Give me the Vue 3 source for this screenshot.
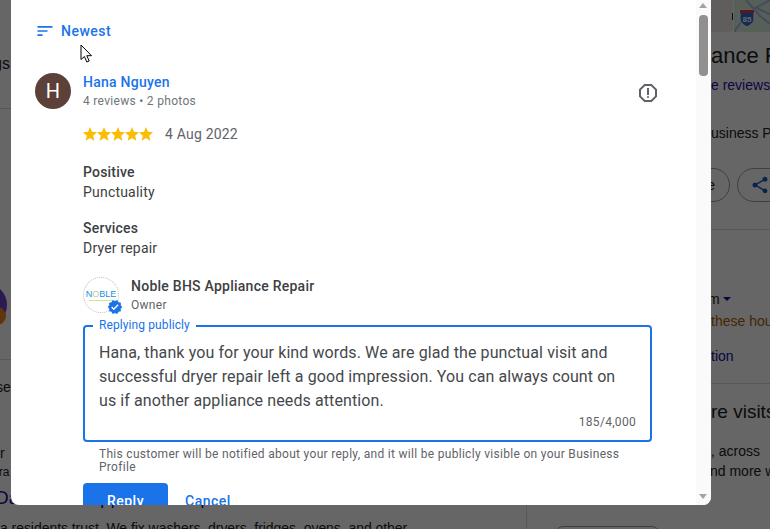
<template>
  <div class="page">
    <div class="main">
      <div class="strip-text gs">gs</div>
      <div class="rule first"></div>
      <div class="biz-avatar"><span class="biz-badge"></span></div>
      <div class="rule second"></div>
      <div class="strip-text se">se</div>
      <div class="strip-text rr">r</div>
      <div class="strip-text ira">ira</div>
      <div class="post-title">Dan's Star Appliance Repair in Atlanta</div>
      <div class="post-text">a residents trust. We fix washers, dryers, fridges, ovens, and other</div>
    </div>
    <div class="side">
      <div class="map-row">
        <div class="photo"><span class="photo-mark"></span></div>
        <svg class="map" viewBox="0 0 36 32">
          <rect width="36" height="32" fill="#d6f0dc" />
          <path d="M0 32L14 12L36 0M12 0L26 16L36 24M22 8L36 14" fill="none" stroke="#a9bce6" stroke-width="2" />
          <path d="M6 10h14v9c0 4-4 6-7 8c-3-2-7-4-7-8z" fill="#2f6fd6" stroke="#fff" stroke-width="1" />
          <rect x="6" y="10" width="14" height="3" fill="#e04040" />
          <text x="13" y="22" class="shield">85</text>
        </svg>
      </div>
      <div class="frag name">ance Repair</div>
      <div class="frag link reviews">e reviews</div>
      <div class="frag plain profile">usiness Profile</div>
      <div class="pills">
        <div class="pill save">e</div>
        <div class="pill share">
          <svg width="20" height="20" viewBox="0 0 24 24"><path d="M18 16.08c-.76 0-1.44.3-1.96.77L8.91 12.7c.05-.23.09-.46.09-.7s-.04-.47-.09-.7l7.05-4.11c.54.5 1.25.81 2.04.81 1.66 0 3-1.34 3-3s-1.34-3-3-3-3 1.34-3 3c0 .24.04.47.09.7L8.04 9.81C7.5 9.31 6.79 9 6 9c-1.66 0-3 1.34-3 3s1.34 3 3 3c.79 0 1.5-.31 2.04-.81l7.12 4.16c-.05.21-.08.43-.08.65 0 1.61 1.31 2.92 2.92 2.92s2.92-1.31 2.92-2.92-1.31-2.92-2.92-2.92z" fill="#1a56c4" /></svg>
        </div>
      </div>
      <div class="side-rule top"></div>
      <div class="frag plain hours">m<span class="caret"></span></div>
      <div class="frag warn">these hours</div>
      <div class="frag link suggest">tion</div>
      <div class="side-rule bottom"></div>
      <div class="frag visits">re visits</div>
      <div class="frag plain across">, across</div>
      <div class="frag plain more">nd more with</div>
      <div class="bottom-pill"></div>
    </div>
    <div class="scrim"></div>

    <div class="dialog">
      <div class="content">
        <div class="sort">
          <svg width="20" height="20" viewBox="0 0 24 24"><path d="M3 18h6v-2H3v2zM3 6v2h18V6H3zm0 7h12v-2H3v2z" fill="#1a73e8" /></svg>
          <span>Newest</span>
        </div>

        <div class="review-head">
          <div class="avatar">H</div>
          <div class="author">
            <div class="author-name">Hana Nguyen</div>
            <div class="author-meta">4 reviews • 2 photos</div>
          </div>
          <svg class="flag" width="24" height="24" viewBox="0 0 24 24" fill="#5f6368">
            <path d="M15.73 3H8.27L3 8.27v7.46L8.27 21h7.46L21 15.73V8.27L15.73 3zM19 14.9L14.9 19H9.1L5 14.9V9.1L9.1 5h5.8L19 9.1v5.8z" />
            <circle cx="12" cy="16" r="1" />
            <rect x="11" y="7" width="2" height="7" />
          </svg>
        </div>

        <div class="body">
          <div class="rating">
            <div class="stars">
              <svg v-for="n in 5" :key="n" width="14" height="14" viewBox="2 2 20 19.3" preserveAspectRatio="none">
                <path d="M12 17.27L18.18 21l-1.64-7.03L22 9.24l-7.19-.61L12 2 9.19 8.63 2 9.24l5.46 4.73L5.82 21z" fill="#fbbc04" />
              </svg>
            </div>
            <span class="date">4 Aug 2022</span>
          </div>

          <div v-for="group in groups" :key="group.title" class="group">
            <div class="group-title">{{ group.title }}</div>
            <div class="group-value">{{ group.value }}</div>
          </div>

          <div class="owner">
            <div class="logo">
              <span class="logo-word">N<i>O</i>BLE</span>
              <span class="logo-bar"></span>
              <svg class="verified" width="16" height="16" viewBox="0 0 24 24">
                <circle cx="12" cy="12" r="7" fill="#fff" />
                <path d="M23 12l-2.44-2.79.34-3.69-3.61-.82-1.89-3.2L12 2.96 8.6 1.5 6.71 4.69 3.1 5.5l.34 3.7L1 12l2.44 2.79-.34 3.7 3.61.82L8.6 22.5l3.4-1.47 3.4 1.46 1.89-3.19 3.61-.82-.34-3.69L23 12zm-12.91 4.72l-3.8-3.81 1.48-1.48 2.32 2.33 5.85-5.87 1.48 1.48-7.33 7.35z" fill="#1a73e8" />
              </svg>
            </div>
            <div>
              <div class="owner-name">Noble BHS Appliance Repair</div>
              <div class="owner-role">Owner</div>
            </div>
          </div>

          <div class="reply-box">
            <span class="reply-label">Replying publicly</span>
            <div class="reply-text">Hana, thank you for your kind words. We are glad the punctual visit and successful dryer repair left a good impression. You can always count on us if another appliance needs attention.</div>
            <div class="reply-count">185/4,000</div>
          </div>
          <div class="notice">This customer will be notified about your reply, and it will be publicly visible on your Business Profile</div>

          <div class="actions">
            <button class="btn-reply">Reply</button>
            <button class="btn-cancel">Cancel</button>
          </div>
        </div>
      </div>
      <div class="scrollbar">
        <span class="arrow up"></span>
        <span class="thumb"></span>
        <span class="arrow down"></span>
      </div>
    </div>

    <svg class="cursor" width="14" height="19" viewBox="0 0 14 19">
      <path d="M1 1v14.5l3.4-3 2.4 5.5 2.4-1-2.4-5.3h4.7z" fill="#fff" stroke="#000" stroke-width="1" stroke-linejoin="round" />
    </svg>
  </div>
</template>

<script setup>
const groups = [
  { title: 'Positive', value: 'Punctuality' },
  { title: 'Services', value: 'Dryer repair' },
]
</script>

<style>
html,
body {
  margin: 0;
  overflow: hidden;
}
</style>

<style scoped>
.page {
  position: relative;
  width: 770px;
  height: 529px;
  overflow: hidden;
  display: flex;
  background: #fff;
  font-family: "Liberation Sans", Arial, sans-serif;
  color: #202124;
}

.main {
  width: 527px;
  height: 529px;
  flex-shrink: 0;
  box-sizing: border-box;
  border-right: 1px solid #dadce0;
  overflow: hidden;
}

.strip-text {
  font-size: 14px;
  line-height: 20px;
}

.gs {
  margin-top: 54px;
  margin-left: -7px;
  font-size: 16px;
}

.rule {
  height: 1px;
  background: #dadce0;
}

.first {
  margin-top: 34px;
}

.biz-avatar {
  position: relative;
  width: 44px;
  height: 44px;
  margin: 174px 0 0 -37px;
  border-radius: 50%;
  background: #6a40d0;
}

.biz-badge {
  position: absolute;
  right: 1px;
  bottom: 2px;
  width: 18px;
  height: 18px;
  border-radius: 50%;
  background: #f0861e;
}

.second {
  margin-top: 32px;
}

.se {
  margin-top: 17px;
  margin-left: -4px;
}

.rr {
  margin-top: 46px;
}

.ira {
  margin-left: -4px;
  font-size: 12px;
  line-height: 18px;
}

.post-title {
  margin: 5px 0 0 -5px;
  font-size: 19px;
  line-height: 24px;
  white-space: nowrap;
  color: #1a0dab;
}

.post-text {
  margin-top: 8px;
  font-size: 14px;
  line-height: 20px;
  letter-spacing: -0.05px;
  white-space: nowrap;
}

.side {
  position: relative;
  flex: 1;
  min-width: 0;
  overflow: hidden;
}

.map-row {
  display: flex;
  gap: 1px;
  margin-left: 184px;
  height: 32px;
}

.photo {
  position: relative;
  width: 22px;
  background: #efece8;
  border-bottom-right-radius: 4px;
}

.photo-mark {
  position: absolute;
  right: 0;
  top: 13px;
  width: 1px;
  height: 7px;
  background: #222;
}

.map {
  width: 36px;
  height: 32px;
  flex-shrink: 0;
}

.shield {
  font-size: 8px;
  font-weight: 700;
  fill: #fff;
  text-anchor: middle;
}

.frag {
  margin-left: 184px;
  white-space: nowrap;
}

.name {
  margin-top: 10px;
  font-size: 22px;
  line-height: 28px;
}

.link {
  color: #1a0dab;
  font-size: 14px;
  line-height: 20px;
}

.plain {
  font-size: 14px;
  line-height: 20px;
}

.reviews {
  margin-top: 5px;
}

.profile {
  margin-top: 28px;
}

.pills {
  display: flex;
  gap: 7px;
  margin: 25px 0 0 100px;
}

.pill {
  flex-shrink: 0;
  height: 34px;
  box-sizing: border-box;
  border: 1px solid #9aa0a6;
  border-radius: 17px;
  display: flex;
  align-items: center;
  font-size: 14px;
}

.save {
  width: 103px;
  justify-content: flex-end;
  padding-right: 14px;
}

.share {
  width: 80px;
  padding-left: 12px;
}

.side-rule {
  height: 1px;
  background: #dadce0;
}

.side-rule.top {
  margin-top: 27px;
}

.hours {
  margin-top: 59px;
  margin-left: 181px;
}

.caret {
  display: inline-block;
  margin-left: 3px;
  vertical-align: 3px;
  border: 4px solid transparent;
  border-top: 4px solid #1a0dab;
  border-bottom: 0;
}

.warn {
  margin-top: 2px;
  font-size: 14px;
  line-height: 20px;
  color: #b06000;
}

.suggest {
  margin-top: 15px;
}

.side-rule.bottom {
  margin-top: 17px;
}

.visits {
  margin-top: 15px;
  font-size: 19px;
  line-height: 26px;
}

.across {
  margin-top: 16px;
  margin-left: 184px;
}

.more {
  margin-left: 183px;
}

.bottom-pill {
  position: absolute;
  left: 28px;
  top: 526px;
  width: 105px;
  height: 30px;
  box-sizing: border-box;
  border: 1px solid #9aa0a6;
  border-radius: 8px;
}

.scrim {
  position: absolute;
  inset: 0;
  background: rgba(0, 0, 0, 0.6);
}

.dialog {
  position: absolute;
  left: 11px;
  top: 0;
  width: 700px;
  height: 505px;
  display: flex;
  overflow: hidden;
  background: #fff;
  border-radius: 0 0 8px 8px;
  font-family: Roboto, Arial, sans-serif;
}

.content {
  flex: 1;
  min-width: 0;
  overflow: hidden;
  padding: 21px 0 0 24px;
}

.sort {
  display: flex;
  align-items: center;
  gap: 6px;
  height: 20px;
  font-size: 14px;
  font-weight: 500;
  letter-spacing: 0.5px;
  color: #1a73e8;
}

.review-head {
  display: flex;
  align-items: flex-start;
  gap: 12px;
  margin-top: 32px;
}

.avatar {
  width: 36px;
  height: 36px;
  border-radius: 50%;
  background: #5d4037;
  color: #fff;
  font-size: 20px;
  line-height: 36px;
  text-align: center;
}

.author {
  flex: 1;
}

.author-name {
  font-size: 14px;
  font-weight: 500;
  line-height: 18px;
  letter-spacing: 0.25px;
  color: #1a73e8;
}

.author-meta {
  margin-top: 1px;
  font-size: 12px;
  line-height: 18px;
  letter-spacing: 0.3px;
  color: #70757a;
}

.flag {
  margin: 8px 36px 0 0;
}

.body {
  margin-left: 48px;
}

.rating {
  display: flex;
  align-items: center;
  gap: 12px;
  height: 20px;
  margin-top: 14px;
}

.stars {
  display: flex;
  width: 70px;
}

.date {
  font-size: 14px;
  letter-spacing: 0.2px;
  color: #5f6368;
}

.group {
  margin-top: 18px;
  font-size: 14px;
  line-height: 20px;
  letter-spacing: 0.2px;
  color: #3c4043;
}

.group + .group {
  margin-top: 16px;
}

.group-title {
  font-weight: 500;
}

.owner {
  display: flex;
  gap: 12px;
  margin-top: 19px;
}

.logo {
  position: relative;
  width: 36px;
  height: 36px;
  box-sizing: border-box;
  border: 1px dotted #bdbdbd;
  border-radius: 50%;
  text-align: center;
}

.logo-word {
  display: block;
  margin-top: 11px;
  font-size: 9px;
  line-height: 10px;
  font-family: "Liberation Sans", sans-serif;
  color: #1592e0;
}

.logo-word i {
  font-style: normal;
  color: #b9c9a0;
}

.logo-bar {
  display: block;
  width: 24px;
  height: 1px;
  margin: 1px auto 0;
  background: #d3e394;
}

.verified {
  position: absolute;
  right: -5px;
  bottom: -3px;
}

.owner-name {
  font-size: 14px;
  font-weight: 500;
  line-height: 18px;
  letter-spacing: 0.25px;
  color: #3c4043;
}

.owner-role {
  margin-top: 1px;
  font-size: 12px;
  line-height: 18px;
  letter-spacing: 0.3px;
  color: #5f6368;
}

.reply-box {
  position: relative;
  width: 569px;
  height: 117px;
  margin-top: 11px;
  box-sizing: border-box;
  border: 2px solid #1a73e8;
  border-radius: 4px;
  padding: 14px 14px 0;
}

.reply-label {
  position: absolute;
  left: 8px;
  top: -9px;
  padding: 0 6px;
  background: #fff;
  font-size: 12px;
  line-height: 14px;
  letter-spacing: 0.1px;
  color: #1a73e8;
}

.reply-text {
  font-size: 16px;
  line-height: 24px;
  letter-spacing: 0.1px;
  color: #45484c;
}

.reply-count {
  position: absolute;
  right: 14px;
  bottom: 10px;
  font-size: 12px;
  line-height: 16px;
  letter-spacing: 0.3px;
  color: #5f6368;
}

.notice {
  width: 540px;
  margin: 6px 0 0 16px;
  font-size: 12px;
  line-height: 13px;
  letter-spacing: 0.3px;
  color: #5f6368;
}

.actions {
  display: flex;
  align-items: center;
  gap: 17px;
  margin-top: 9px;
}

.actions button {
  height: 36px;
  border: none;
  font-family: Roboto, Arial, sans-serif;
  font-size: 14px;
  font-weight: 500;
  letter-spacing: 0.5px;
  padding: 0;
}

.btn-reply {
  width: 85px;
  border-radius: 4px;
  background: #1a73e8;
  color: #fff;
}

.btn-cancel {
  background: none;
  color: #1a73e8;
}

.scrollbar {
  position: relative;
  width: 15px;
  flex-shrink: 0;
  background: #fafafa;
}

.arrow {
  position: absolute;
  left: 3px;
  border: 4.5px solid transparent;
}

.arrow.up {
  top: 3px;
  border-top: 0;
  border-bottom: 5px solid #a3a3a3;
}

.arrow.down {
  bottom: 6px;
  border-bottom: 0;
  border-top: 5px solid #a3a3a3;
}

.thumb {
  position: absolute;
  left: 3px;
  top: 15px;
  width: 9px;
  height: 61px;
  border-radius: 4px;
  background: #909090;
}

.cursor {
  position: absolute;
  left: 80px;
  top: 44px;
}
</style>
